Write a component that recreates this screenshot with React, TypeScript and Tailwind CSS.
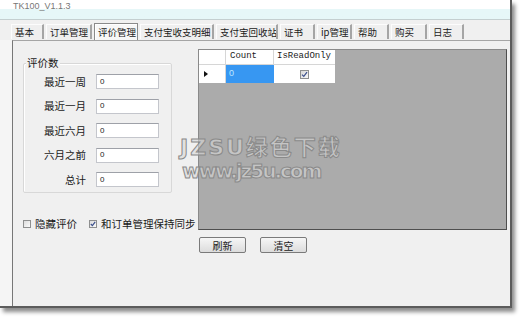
import React from 'react'

const tabs = [
  { label: '基本', w: 33 },
  { label: '订单管理', w: 46 },
  { label: '评价管理', w: 44, active: true },
  { label: '支付宝收支明细', w: 74 },
  { label: '支付宝回收站', w: 62 },
  { label: '证书', w: 35 },
  { label: 'ip管理', w: 35 },
  { label: '帮助', w: 35 },
  { label: '购买', w: 36 },
  { label: '日志', w: 35 },
]

const rows = ['最近一周', '最近一月', '最近六月', '六月之前', '总计']

function Check({ checked }: { checked?: boolean }) {
  return (
    <span className="w-[8px] h-[8px] border border-[#8e8f8f] bg-linear-to-br from-[#dcdcdc] to-[#fbfbfb] flex items-center justify-center shrink-0">
      {checked && (
        <svg width="6" height="6" viewBox="0 0 6 6">
          <path d="M0.8 3 L2.4 4.6 L5.2 0.9" fill="none" stroke="#3b4f8c" strokeWidth="1.2" />
        </svg>
      )}
    </span>
  )
}

function Btn({ children }: { children: React.ReactNode }) {
  return (
    <div className="w-[47px] h-[16px] border border-[#7a7a7a] rounded-[2px] bg-linear-to-b from-[#f6f6f6] to-[#dcdcdc] flex items-center justify-center text-[10px] text-[#222]">
      {children}
    </div>
  )
}

export default function App() {
  return (
    <div className="w-[523px] h-[319px] bg-white relative overflow-hidden font-['Noto_Sans_CJK_SC',sans-serif] text-[#1a1a1a]">
      <div className="w-[512px] h-[308px] flex flex-col border-r-2 border-b-2 border-[#5c5c5c] shadow-[3px_4px_4px_rgba(0,0,0,0.45)]">
        {/* title strip */}
        <div className="h-[20px] bg-linear-to-b from-white from-45% to-[#e6f7f8] to-50% border-b border-[#c4cfd0]">
          <div className="ml-[13px] pt-[1px] text-[9px] leading-[10px] text-[#777] font-['Liberation_Sans',sans-serif]">TK100_V1.1.3</div>
        </div>

        {/* tab strip */}
        <div className="h-[20px] bg-[#f0f0f0] flex items-end gap-[2px] pl-[11px]">
          {tabs.map(t => (
            <div
              key={t.label}
              style={{ width: t.w }}
              className={`flex items-center pl-[3px] text-[9.5px] whitespace-nowrap overflow-hidden ${
                t.active
                  ? 'h-[17px] bg-[#f7f7f7] border border-b-0 border-[#8a8a8a] shadow-[inset_1px_1px_0_#fff]'
                  : 'h-[15px] mb-[1px] bg-[#efefef] border-l border-t border-[#fcfcfc] border-r-2 border-r-[#a5a5a5]'
              }`}
            >
              {t.label}
            </div>
          ))}
        </div>

        {/* tab page */}
        <div className="flex-1 flex bg-[#f5f5f5]">
          <div className="flex-1 ml-[12px] border-l border-t border-[#777] border-t-[#a5a5a5] bg-[#f0f0f0] flex relative">
            {/* left column */}
            <div className="w-[185px] pl-[10px] pt-[22px] flex flex-col">
              <div className="relative w-[149px] h-[130px] border border-[#d8d8d8] rounded-[2px] shadow-[inset_1px_1px_0_#fff] pt-[10px] flex flex-col gap-[9.5px]">
                <span className="absolute left-[2px] top-[-8px] px-[1px] bg-[#f0f0f0] text-[10.5px] leading-[14px]">评价数</span>
                {rows.map(r => (
                  <div key={r} className="h-[15px] flex items-center">
                    <span className="w-[62px] text-right text-[10.5px]">{r}</span>
                    <div className="ml-[10px] w-[63px] h-[15px] bg-white border border-[#c4c6cc] border-t-[#9ea1a8] flex items-center pl-[3px] text-[8px] font-['Liberation_Sans',sans-serif]">0</div>
                  </div>
                ))}
              </div>
              <div className="mt-[24px] h-[14px] flex items-center text-[10.5px]">
                <Check />
                <span className="ml-[4px]">隐藏评价</span>
                <span className="ml-[12px]"><Check checked /></span>
                <span className="ml-[4px]">和订单管理保持同步</span>
              </div>
            </div>

            {/* right column */}
            <div className="pt-[8px] flex flex-col">
              <div className="w-[309px] h-[181px] bg-[#ababab] border border-[#4e4e4e] border-t-[#8a8a8a] border-l-[#8a8a8a]">
                <div className="flex h-[15px] bg-white w-[136px] border-b border-[#d6d6d6] text-[9px] font-['Liberation_Mono',monospace]">
                  <div className="w-[27px] border-r border-[#d6d6d6]" />
                  <div className="w-[48px] border-r border-[#d6d6d6] pl-[4px] flex items-center">Count</div>
                  <div className="w-[61px] pl-[3px] flex items-center">IsReadOnly</div>
                </div>
                <div className="flex h-[18px] bg-white w-[136px] text-[9px]">
                  <div className="w-[27px] border-r border-[#d6d6d6] flex items-center pl-[5px]">
                    <svg width="4" height="6" viewBox="0 0 4 6"><path d="M0 0 L4 3 L0 6 Z" fill="#111" /></svg>
                  </div>
                  <div className="w-[48px] bg-[#3797f2] pl-[3px] flex items-center text-[#bfe6ff] font-['Liberation_Sans',sans-serif]">0</div>
                  <div className="w-[61px] flex items-center justify-center">
                    <span className="w-[9px] h-[9px] border border-[#8e8f8f] bg-linear-to-br from-[#d8d8d8] to-[#f8f8f8] flex items-center justify-center">
                      <svg width="7" height="7" viewBox="0 0 7 7">
                        <path d="M1 3.6 L2.8 5.4 L6 1.2" fill="none" stroke="#3b4f8c" strokeWidth="1.2" />
                      </svg>
                    </span>
                  </div>
                </div>
              </div>
              <div className="mt-[7px] ml-[1px] flex gap-[14px]">
                <Btn>刷新</Btn>
                <Btn>清空</Btn>
              </div>
            </div>

            {/* watermark overlay */}
            <div className="absolute left-[167px] top-[95px] flex flex-col items-start pointer-events-none font-['DejaVu_Sans','Noto_Sans_CJK_SC',sans-serif] font-bold text-[rgba(215,215,215,0.6)] [-webkit-text-stroke:1px_#8a8a8a]">
              <span className="text-[22px] leading-[24px] tracking-[2px]">JZSU绿色下载</span>
              <span className="text-[20px] leading-[22px] tracking-[-2px] ml-[2px]">www.jz5u.com</span>
            </div>
          </div>
        </div>
      </div>
    </div>
  )
}
